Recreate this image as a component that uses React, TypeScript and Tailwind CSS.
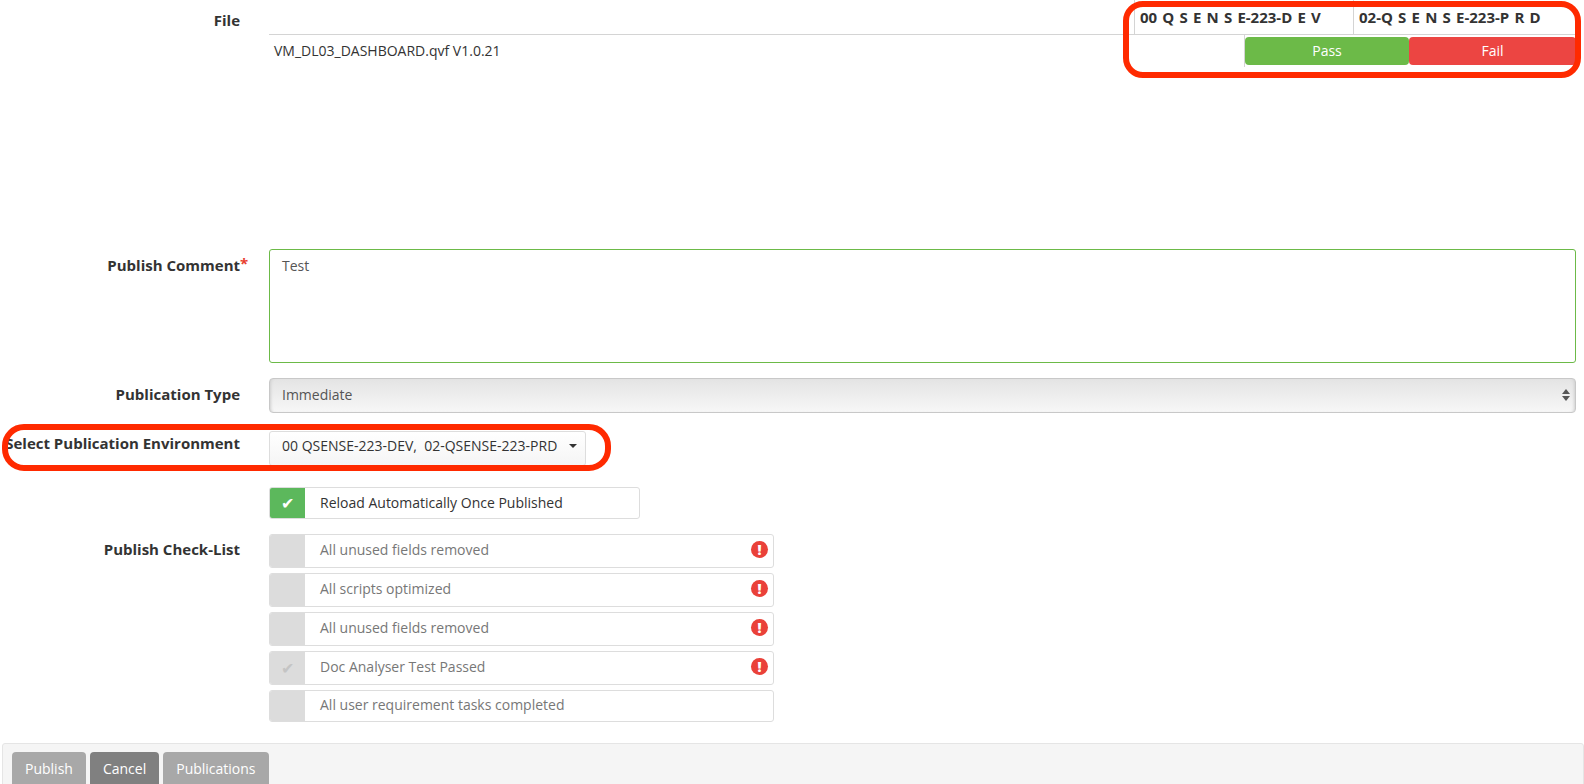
const font = { fontFamily: '"Open Sans", sans-serif' }

function Row({ label, required, className, labelClass, children }: { label?: string; required?: boolean; className?: string; labelClass?: string; children: React.ReactNode }) {
  return (
    <div className={`flex ${className ?? ''}`}>
      <div className={`w-[240px] shrink-0 whitespace-nowrap text-right text-[15px] font-bold text-[#333] ${labelClass ?? ''}`}>
        <span className="relative">
          {label}
          {required && <span className="absolute -top-[3px] left-full text-[15px] text-[#e8412f]">*</span>}
        </span>
      </div>
      <div className="ml-[29px] min-w-0 flex-1">{children}</div>
    </div>
  )
}

function CheckItem({ text, alert, checked, last }: { text: string; alert?: boolean; checked?: boolean; last?: boolean }) {
  return (
    <div className={`flex w-[505px] items-center overflow-hidden rounded-[3px] border border-[#ddd] bg-white ${last ? 'h-[32px]' : 'h-[34px]'}`}>
      <div className="flex h-full w-[35px] shrink-0 items-center justify-center bg-[#dcdcdc] text-[16px] text-[#c4c4c4]">
        {checked ? '✔' : ''}
      </div>
      <div className="ml-[15px] flex-1 pb-[3px] text-[14px] text-[#777]">{text}</div>
      {alert && (
        <div className="mb-[3px] mr-[5px] flex h-[17px] w-[17px] items-center justify-center rounded-full bg-[#ea4139] text-[14px] font-extrabold leading-none text-white">
          !
        </div>
      )}
    </div>
  )
}

export default function App() {
  return (
    <div style={font} className="relative h-[784px] w-[1584px] overflow-hidden bg-white">
      <Row label="File" className="pr-[8px]" labelClass="pt-[9px]">
        <div className="flex h-[35px] justify-end border-b border-[#d4d4d4]">
          <div className="w-[219px] border-l border-[#d4d4d4] pl-[5px] pt-[7px] text-[15px] font-bold leading-[20px] text-[#333] [word-spacing:1.3px]">00 Q S E N S E-223-D E V</div>
          <div className="w-[223px] border-l border-[#d4d4d4] pl-[5px] pt-[7px] text-[15px] font-bold leading-[20px] text-[#333] [word-spacing:1.3px]">02-Q S E N S E-223-P R D</div>
        </div>
        <div className="flex justify-between">
          <div className="pl-[5px] pt-[5px] text-[14px] text-[#333]">VM_DL03_DASHBOARD.qvf V1.0.21</div>
          <div className="flex h-[32px] border-l border-[#d4d4d4] pt-[2px]">
            <div className="flex h-[28px] w-[164px] items-center justify-center rounded-[4px] bg-[#6cba48] pb-[2px] text-[14px] text-white">Pass</div>
            <div className="flex h-[28px] w-[167px] items-center justify-center rounded-[4px] bg-[#ec4542] pb-[2px] text-[14px] text-white">Fail</div>
          </div>
        </div>
      </Row>

      <Row label="Publish Comment" required className="mt-[182px] pr-[8px]" labelClass="pt-[5px]">
        <div className="h-[114px] rounded-[3px] border border-[#6cba48] px-[12px] py-[5px] text-[14px] text-[#555]">Test</div>
      </Row>

      <Row label="Publication Type" className="mt-[15px] pr-[8px]" labelClass="pt-[5px]">
        <div className="flex h-[35px] items-center justify-between rounded-[4px] border border-[#c8c8c8] bg-gradient-to-b from-[#e4e4e4] to-[#f7f7f7] pb-[2px] pl-[12px] pr-[5px] text-[14px] text-[#555] shadow-[inset_3px_0_3px_-2px_#cfcfcf,inset_-3px_0_3px_-2px_#cfcfcf]">
          Immediate
          <span className="flex flex-col gap-[2px]">
            <span className="h-0 w-0 border-x-[4px] border-b-[5px] border-x-transparent border-b-[#555]" />
            <span className="h-0 w-0 border-x-[4px] border-t-[5px] border-x-transparent border-t-[#555]" />
          </span>
        </div>
      </Row>

      <Row label="Select Publication Environment" className="mt-[18px]" labelClass="pt-[1px]">
        <div className="flex h-[35px] w-[317px] items-center rounded-[3px] border border-[#ddd] bg-gradient-to-b from-white to-[#f5f5f5] pb-[6px] pl-[12px] text-[14px] text-[#333]">
          <span className="whitespace-pre">00 QSENSE-223-DEV,  02-QSENSE-223-PRD</span>
          <span className="ml-[12px] h-0 w-0 border-x-[4px] border-t-[4px] border-x-transparent border-t-[#333]" />
        </div>
      </Row>

      <Row className="mt-[21px]">
        <div className="flex h-[32px] w-[371px] items-center overflow-hidden rounded-[3px] border border-[#ddd]">
          <div className="flex h-full w-[35px] items-center justify-center bg-[#5cb85c] text-[16px] text-white">✔</div>
          <div className="ml-[15px] pb-[2px] text-[14px] text-[#333]">Reload Automatically Once Published</div>
        </div>
      </Row>

      <Row label="Publish Check-List" className="mt-[15px]" labelClass="pt-[4px]">
        <div className="flex flex-col gap-[5px]">
          <CheckItem text="All unused fields removed" alert />
          <CheckItem text="All scripts optimized" alert />
          <CheckItem text="All unused fields removed" alert />
          <CheckItem text="Doc Analyser Test Passed" alert checked />
          <CheckItem text="All user requirement tasks completed" last />
        </div>
      </Row>

      <div className="ml-[2px] mt-[21px] flex h-[60px] gap-[4px] rounded-[3px] border border-[#e5e5e5] bg-[#f5f5f5] pl-[9px] pt-[8px]">
        <div className="h-[40px] rounded-[4px] bg-[#a8a8a8] px-[13px] pt-[6px] text-[14px] text-white">Publish</div>
        <div className="h-[40px] rounded-[4px] bg-[#808080] px-[13px] pt-[6px] text-[14px] text-white">Cancel</div>
        <div className="h-[40px] rounded-[4px] bg-[#a8a8a8] px-[13px] pt-[6px] text-[14px] text-white">Publications</div>
      </div>

      <div className="absolute left-[1123px] top-[1px] h-[77px] w-[458px] rounded-[20px] border-[6px] border-[#ff2a00]" />
      <div className="absolute left-[2px] top-[424px] h-[47px] w-[609px] rounded-[22px] border-[6px] border-[#ff2a00]" />
    </div>
  )
}
